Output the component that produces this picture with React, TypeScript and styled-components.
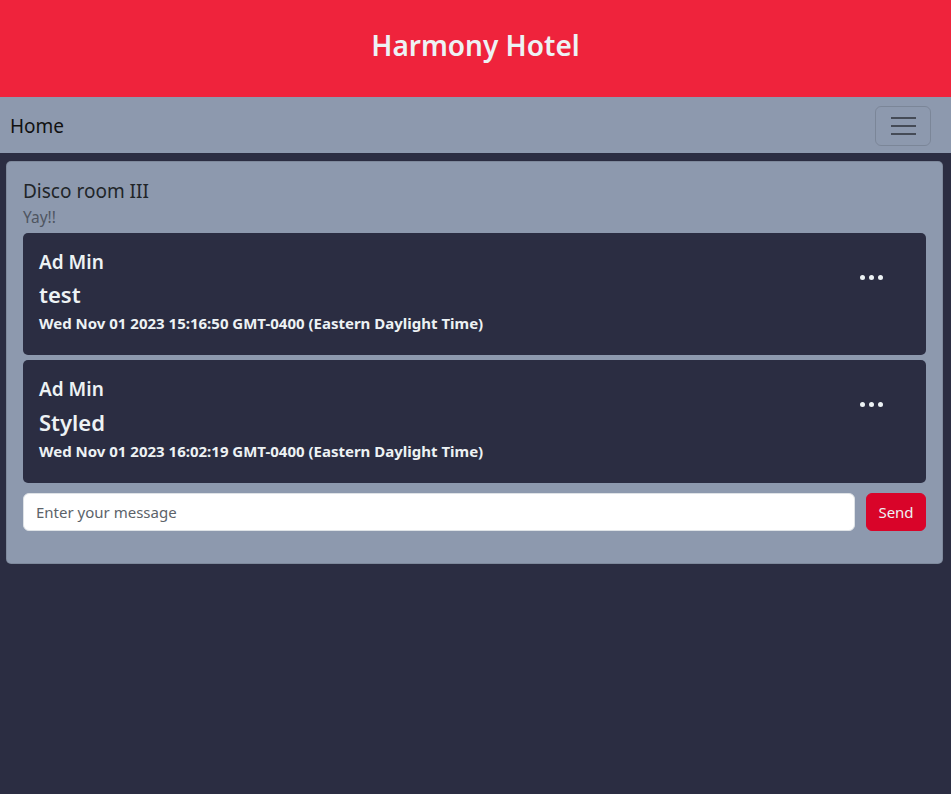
import React from 'react'
import styled, { createGlobalStyle } from 'styled-components'

type Message = {
    author: string,
    text: string,
    date: string,
}

const messages: Message[] = [
    { author: 'Ad Min', text: 'test', date: 'Wed Nov 01 2023 15:16:50 GMT-0400 (Eastern Daylight Time)' },
    { author: 'Ad Min', text: 'Styled', date: 'Wed Nov 01 2023 16:02:19 GMT-0400 (Eastern Daylight Time)' },
]

const GlobalStyle = createGlobalStyle`
    * { box-sizing: border-box; }
    body {
        margin: 0;
        background-color: #2b2d42;
        font-family: "Noto Sans", "Open Sans", sans-serif;
        color: #212529;
    }
`

const Header = styled.header`
    height: 97px;
    background-color: #ef233c;
    display: flex;
    align-items: center;
    justify-content: center;
    padding-bottom: 8px;
`

const Title = styled.h1`
    margin: 0;
    font-size: 28px;
    font-weight: 600;
    color: #edf2f4;
`

const Navbar = styled.nav`
    height: 56px;
    background-color: #8d99ae;
    display: flex;
    align-items: center;
    justify-content: space-between;
    padding: 2px 20px 0 10px;
`

const Brand = styled.span`
    font-size: 19px;
    color: #111;
`

const Toggler = styled.button`
    width: 56px;
    height: 40px;
    background: transparent;
    border: 1px solid rgba(0, 0, 0, 0.12);
    border-radius: 6px;
    display: flex;
    flex-direction: column;
    align-items: center;
    justify-content: center;
    gap: 6px;
    padding: 0;
`

const TogglerBar = styled.span`
    width: 25px;
    height: 2px;
    background-color: #454b56;
`

const Main = styled.main`
    padding: 8px 8px 0 6px;
`

const RoomCard = styled.section`
    background-color: #8d99ae;
    border: 1px solid rgba(0, 0, 0, 0.1);
    border-radius: 5px;
    padding: 16px 16px 32px 16px;
`

const RoomName = styled.h2`
    margin: 0;
    font-size: 19px;
    font-weight: 400;
    color: #212529;
    line-height: 1.3;
    padding-top: 1px;
`

const RoomTopic = styled.p`
    margin: 2px 0 5px;
    font-size: 15.5px;
    color: #4f5561;
`

const MessageList = styled.div`
    display: flex;
    flex-direction: column;
    gap: 5px;
`

const MessageCard = styled.div`
    background-color: #2b2d42;
    border-radius: 5px;
    padding: 18px 16px 21px;
    display: flex;
    align-items: flex-start;
    justify-content: space-between;
    color: #edf2f4;
`

const MessageBody = styled.div`
    display: flex;
    flex-direction: column;
`

const Author = styled.span`
    font-size: 19px;
    font-weight: 600;
    line-height: 1.2;
    margin-bottom: 8px;
`

const MessageText = styled.span`
    font-size: 22px;
    font-weight: 600;
    line-height: 1.2;
    margin-bottom: 4px;
`

const MessageDate = styled.span`
    font-size: 15px;
    font-weight: 700;
    line-height: 1.5;
`

const MenuButton = styled.button`
    background: transparent;
    border: none;
    padding: 0;
    margin: 24px 27px 0 0;
    display: flex;
    gap: 4px;
`

const Dot = styled.span`
    width: 5px;
    height: 5px;
    border-radius: 50%;
    background-color: #edf2f4;
`

const Form = styled.form`
    display: flex;
    gap: 11px;
    margin-top: 10px;
`

const Input = styled.input`
    flex: 1;
    height: 38px;
    border: 1px solid #dee2e6;
    border-radius: 6px;
    padding: 0 12px;
    font-family: inherit;
    font-size: 15px;
    &::placeholder { color: #5c636a; }
`

const SendButton = styled.button`
    width: 60px;
    height: 38px;
    background-color: #d90429;
    border: 1px solid #d90429;
    border-radius: 6px;
    color: #edf2f4;
    font-family: inherit;
    font-size: 15px;
`

const App: React.FC = () => {
    return (
        <>
            <GlobalStyle />
            <Header>
                <Title>Harmony Hotel</Title>
            </Header>
            <Navbar>
                <Brand>Home</Brand>
                <Toggler aria-label="Toggle navigation">
                    <TogglerBar />
                    <TogglerBar />
                    <TogglerBar />
                </Toggler>
            </Navbar>
            <Main>
                <RoomCard>
                    <RoomName>Disco room III</RoomName>
                    <RoomTopic>Yay!!</RoomTopic>
                    <MessageList>
                        {messages.map((m) => (
                            <MessageCard key={m.date}>
                                <MessageBody>
                                    <Author>{m.author}</Author>
                                    <MessageText>{m.text}</MessageText>
                                    <MessageDate>{m.date}</MessageDate>
                                </MessageBody>
                                <MenuButton type="button" aria-label="Options">
                                    <Dot /><Dot /><Dot />
                                </MenuButton>
                            </MessageCard>
                        ))}
                    </MessageList>
                    <Form onSubmit={(e) => e.preventDefault()}>
                        <Input placeholder="Enter your message" />
                        <SendButton type="submit">Send</SendButton>
                    </Form>
                </RoomCard>
            </Main>
        </>
    )
}

export default App
